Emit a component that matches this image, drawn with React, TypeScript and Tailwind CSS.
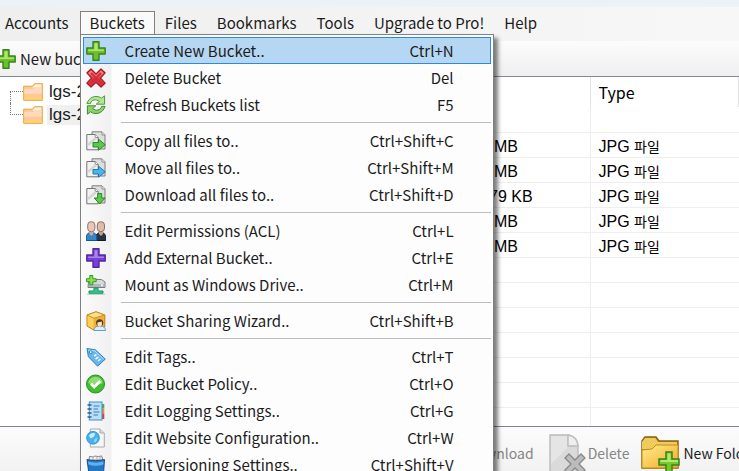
import type { ReactNode } from "react";

const uiFont = "font-['Noto_Sans_CJK_KR','Noto_Sans',sans-serif]";
const listFont = "font-['Liberation_Sans','Noto_Sans_CJK_KR',sans-serif]";

function Plus({ fill, light, stroke, className }: { fill: string; light: string; stroke: string; className: string }) {
  return (
    <svg viewBox="0 0 20 20" className={className} aria-hidden="true">
      <path d="M7 .8h6v6.2h6.2v6H13v6.2H7V13H.8V7H7z" fill={fill} stroke={stroke} strokeWidth="1.4" strokeLinejoin="round" />
      <path d="M8.4 2.2h3.2v6.2h6.2V10H2.2V8.4h6.2z" fill={light} />
    </svg>
  );
}

function Svg({ children }: { children: ReactNode }) {
  return (
    <svg viewBox="0 0 20 20" className="size-5 shrink-0" aria-hidden="true">
      {children}
    </svg>
  );
}

const greenPlus = (className: string) => <Plus fill="#6dc02c" light="#b4e66c" stroke="#38841e" className={className} />;

function CrossIcon() {
  return (
    <Svg>
      <path d="M5 .8l5 5 5-5 4.2 4.2-4.6 5 4.6 5-4.2 4.2-5-4.8-5 4.8L.8 15l4.6-5L.8 5z" fill="#d9333f" stroke="#a5131e" strokeWidth="1.1" strokeLinejoin="round" />
      <path d="M5 2.2l5 5 5-5L17.8 5l-5 4.4H7.2L2.2 5z" fill="#f0858b" />
      <path d="M5 5l10 10M15 5L5 15" stroke="#d42c3b" strokeWidth="2.4" />
    </Svg>
  );
}

function RefreshIcon() {
  return (
    <Svg>
      <path d="M.9 8.6C2.6 2.6 9.8-.9 15.4 3.2L18.6.8v8.4h-8.4l3.2-2.8C10 3.9 5.4 4.3 4.4 8.6z" fill="#b6e596" stroke="#4c9a3c" strokeLinejoin="round" />
      <path d="M19.1 11.4c-1.7 6-8.9 9.5-14.5 5.4l-3.2 2.4v-8.4h8.4l-3.2 2.8c3.4 2.5 8 2.1 9-2.2z" fill="#8ed26a" stroke="#3d8f34" strokeLinejoin="round" />
    </Svg>
  );
}

function PagesIcon({ kind }: { kind: "copy" | "move" | "download" }) {
  const fill = kind === "move" ? "#4ab7e8" : "#5cc94b";
  const stroke = kind === "move" ? "#1b79b2" : "#258a2a";
  return (
    <Svg>
      <path d="M6 .8h10l3 3V18H6z" fill="#dedede" stroke="#7f7f7f" strokeLinejoin="round" />
      <path d="M.8 3.5h8.4l3 3v12.3H.8z" fill="#f2f2f2" stroke="#747474" strokeLinejoin="round" />
      <path d="M9.200 3.500v3h3M16 1v3h3" fill="#fff" stroke="#888" />
      <path d="M2 14l8-7" stroke="#d6d6d6" strokeWidth="2.500" />
      {kind === "download" ? (
        <path d="M11.7 8.5h4V13h3.5l-5.5 6-5.500-6h3.500z" fill={fill} stroke={stroke} strokeLinejoin="round" />
      ) : (
        <path d="M7 11.500h5.500V8.200l6.800 5.600-6.800 5.400V16H7z" fill={fill} stroke={stroke} strokeLinejoin="round" />
      )}
    </Svg>
  );
}

function PeopleIcon() {
  return (
    <Svg>
      <path d="M9.5 19.5v-5l3-2.6h5l2.2 2.6v5z" fill="#263342" stroke="#111a24" />
      <path d="M13 9h4v4l-2 2-2-2z" fill="#c99f8b" />
      <rect x="11.3" y=".7" width="7.2" height="10" rx="3.4" fill="#dfbba9" stroke="#8e6c60" />
      <path d="M.3 19.5v-5l2.2-2.6h5.8l2.5 2.6v5z" fill="#3185cb" stroke="#15528e" />
      <path d="M3.4 9h4v4l-2 2-2-2z" fill="#d2aa97" />
      <rect x="1.7" y=".7" width="7.2" height="10" rx="3.4" fill="#e7c8b9" stroke="#94766a" />
    </Svg>
  );
}

function DriveIcon() {
  return (
    <Svg>
      <path d="M2.5 7L6 4.5h9.5L19 7v5.5H2z" fill="#d5d8d9" stroke="#777d80" strokeLinejoin="round" />
      <path d="M3 9h15.500v3H3z" fill="#b2b7ba" />
      <circle cx="16" cy="10.300" r="1" fill="#fff" />
      <path d="M8 13h4v3h5v2.4H3V16h5z" fill="#32c78c" stroke="#189566" />
      <path d="M1 19.3h18" stroke="#b8c9c2" />
      <path d="M3.800.500h3v3.200h3.400v3H6.800v3.100h-3V6.700H.500v-3h3.300z" fill="#8be052" stroke="#2f9c20" />
    </Svg>
  );
}

function BoxIcon() {
  return (
    <Svg>
      <path d="M1 4l9-3.2L18.8 4v12L8 19.2 1 15z" fill="#efb236" stroke="#bd7f16" strokeLinejoin="round" />
      <path d="M1 4l9-3.2L18.8 4 8 7.2z" fill="#fbe08c" stroke="#cb9223" strokeLinejoin="round" />
      <path d="M1.6 4.8L7.5 7.8v10.5l-5.9-3.8z" fill="#ffd15c" />
      <path d="M8 19.5c0-3 2.3-4.5 6-4.5s5.5 1.8 5.5 4.5z" fill="#d9efff" stroke="#699ac0" />
      <circle cx="13.7" cy="11.8" r="3.6" fill="#50372c" />
      <path d="M11.4 11.6l4.5-1.2v3.5c-.7 2.3-3.9 2.3-4.5 0z" fill="#ffe0bd" />
    </Svg>
  );
}

function TagIcon() {
  return (
    <Svg>
      <path d="M1 1.5l8.5 1.4 9.8 9.2-7.7 7.1L2.4 9.7z" fill="#68b7ec" stroke="#2d82c0" strokeLinejoin="round" />
      <path d="M2.3 3l6.6 1 8.7 8.1" fill="none" stroke="#b8e1fb" />
      <circle cx="4.8" cy="5.1" r="1.4" fill="#fff" stroke="#347fb2" />
      <path d="M8 9l2.500-1.500M9.500 12l3-2M12 14l2.500-2" stroke="#e9f7ff" strokeWidth="1.6" />
    </Svg>
  );
}

function CheckIcon() {
  return (
    <Svg>
      <circle cx="9.5" cy="10" r="9" fill="#42bd32" stroke="#239222" />
      <path d="M2.2 9a7.4 7.4 0 0114.6 0c-4 2-10 2-14.6 0z" fill="#90db79" />
      <path d="M5 9.8l3.2 3.3 6-6" fill="none" stroke="#fff" strokeWidth="2.8" />
    </Svg>
  );
}

function LogIcon() {
  return (
    <Svg>
      <path d="M16 3h2.3v4.5H16z" fill="#4cae40" />
      <path d="M16 7.5h2.3v5H16z" fill="#ef8b31" />
      <path d="M16 12.5h2.3V18H16z" fill="#d94336" />
      <rect x="3.3" y="1" width="12.7" height="18" fill="#b7defa" stroke="#3f92d0" />
      <path d="M1.5 4h4M1.5 8h4M1.5 12h4M1.5 16h4" stroke="#375b80" strokeWidth="1.3" />
      <path d="M7.5 5h6M7.5 8h4.5M7.5 11h6M7.5 14h4.5" stroke="#3b80b8" />
    </Svg>
  );
}

function WebIcon() {
  return (
    <Svg>
      <path d="M4.3 1H14l4.3 4v14h-14z" fill="#f6f6f6" stroke="#aaa" />
      <path d="M14 1v4h4.3" fill="#ddd" stroke="#aaa" />
      <circle cx="7" cy="9.8" r="6.3" fill="#49b1ef" stroke="#2992d7" />
      <path d="M3 7.7c1.2-2.3 4.2-3.4 6.3-2.1L8 8.5l-3.2 2z" fill="#c9efff" />
      <path d="M8.5 11l3-1.3-1.3 4.1-2 .6z" fill="#8fdaff" />
    </Svg>
  );
}

function VersionIcon() {
  return (
    <Svg>
      <path d="M3 5l.5-3.6 4 .6 1-1 4 .6 3-.7L17 5z" fill="#f4f4f4" stroke="#828282" />
      <path d="M7 1.5V5M11 1.5V5M14 2v3" stroke="#aaa" />
      <path d="M1 4.5c5 1.5 12.5 1.5 17.5 0l-1 14.5H3z" fill="#2377c5" stroke="#174f92" />
      <path d="M2 6.6c5 1.4 10.7 1.4 15.4 0v2.8c-5 1.8-10.2 1.8-15 0z" fill="#62b2ea" />
    </Svg>
  );
}

function FolderIcon() {
  return (
    <svg viewBox="0 0 20 20" className="size-5 shrink-0" aria-hidden="true">
      <path d="M.7 4.2h8.8l2-2.5h7.8v16.6H.7z" fill="#ffc898" stroke="#e8a33c" />
      <path d="M10.4 4.4l1.6-2h6.3v3H9.5z" fill="#fff3df" />
      <path d="M1.3 7h8.8l1.2-1.2h7.4v6H1.3z" fill="#ffd9bb" />
      <path d="M1.2 15h17.6v2.6H1.2z" fill="#ffd46e" />
    </svg>
  );
}

function DeleteFileIcon() {
  return (
    <svg viewBox="0 0 38 40" className="h-10 w-[38px] shrink-0" aria-hidden="true">
      <path d="M2 2h19q9 3 9 12v25H2z" fill="#dadada" stroke="#bcbcbc" strokeWidth="1.4" />
      <path d="M3 3h16v12L3 31z" fill="#e5e5e5" />
      <path d="M20 2v11h10Q29 3 20 2z" fill="#eee" stroke="#bcbcbc" strokeWidth="1.4" />
      <path d="M21 21l6 6 6-6 4 4-6 6 6 6-4 4-6-6-6 6-4-4 6-6-6-6z" fill="#bcbcbc" stroke="#888" strokeWidth="1.3" />
    </svg>
  );
}

function NewFolderIcon() {
  return (
    <svg viewBox="0 0 40 40" className="size-10 shrink-0" aria-hidden="true">
      <defs>
        <linearGradient id="folder" x2="1" y2="1">
          <stop stopColor="#ffed91" />
          <stop offset="1" stopColor="#f0a91f" />
        </linearGradient>
      </defs>
      <path d="M1 35V8l3-4h11l3 4h19v27z" fill="#d69b21" stroke="#886414" strokeWidth="1.5" />
      <path d="M1 34V9l3-4h10l3 4h19v4H14l-3 3H1z" fill="#f0cb5c" />
      <path d="M1 35V17l10-1 4-4h22v23z" fill="url(#folder)" stroke="#c18c1c" />
      <path d="M25 19h6v7h7v6h-7v8h-6v-8h-7v-6h7z" fill="#75c82f" stroke="#39821d" strokeWidth="1.5" />
      <path d="M26.5 20.5h3V27H37v2H19.500v-2h7z" fill="#b5e96a" />
    </svg>
  );
}

type Entry = { label: string; keys: string; icon: ReactNode };

const groups: Entry[][] = [
  [
    { label: "Create New Bucket..", keys: "Ctrl+N", icon: greenPlus("size-5 shrink-0") },
    { label: "Delete Bucket", keys: "Del", icon: <CrossIcon /> },
    { label: "Refresh Buckets list", keys: "F5", icon: <RefreshIcon /> },
  ],
  [
    { label: "Copy all files to..", keys: "Ctrl+Shift+C", icon: <PagesIcon kind="copy" /> },
    { label: "Move all files to..", keys: "Ctrl+Shift+M", icon: <PagesIcon kind="move" /> },
    { label: "Download all files to..", keys: "Ctrl+Shift+D", icon: <PagesIcon kind="download" /> },
  ],
  [
    { label: "Edit Permissions (ACL)", keys: "Ctrl+L", icon: <PeopleIcon /> },
    { label: "Add External Bucket..", keys: "Ctrl+E", icon: <Plus fill="#7742d2" light="#a982ee" stroke="#5426a4" className="size-5 shrink-0" /> },
    { label: "Mount as Windows Drive..", keys: "Ctrl+M", icon: <DriveIcon /> },
  ],
  [{ label: "Bucket Sharing Wizard..", keys: "Ctrl+Shift+B", icon: <BoxIcon /> }],
  [
    { label: "Edit Tags..", keys: "Ctrl+T", icon: <TagIcon /> },
    { label: "Edit Bucket Policy..", keys: "Ctrl+O", icon: <CheckIcon /> },
    { label: "Edit Logging Settings..", keys: "Ctrl+G", icon: <LogIcon /> },
    { label: "Edit Website Configuration..", keys: "Ctrl+W", icon: <WebIcon /> },
    { label: "Edit Versioning Settings..", keys: "Ctrl+Shift+V", icon: <VersionIcon /> },
  ],
];

function BucketsMenu() {
  return (
    <div
      role="menu"
      className="absolute top-full -left-px z-10 w-[414px] border border-[#808080] bg-[linear-gradient(to_right,#fbfbfb_0px,#f0f0f0_30px,#fdfdfd_31px)] px-0.5 pt-0.5 shadow-[4px_4px_4px_rgba(0,0,0,0.5)]"
    >
      {groups.map((group, g) => (
        <div key={g}>
          {g > 0 && (
            <div role="separator" className="flex h-[9px] items-center pl-[38px]">
              <div className="h-px w-full bg-[#bdbdbd]" />
            </div>
          )}
          {group.map((entry, i) => (
            <button
              key={entry.label}
              role="menuitem"
              className={`flex h-[27px] w-full items-center border pr-9 pl-0.5 text-left whitespace-nowrap ${
                g === 0 && i === 0 ? "border-[#2b8bdc] bg-[#b5d7f3]" : "border-transparent"
              }`}
            >
              {entry.icon}
              <span className="ml-[19px] flex-1">{entry.label}</span>
              <span>{entry.keys}</span>
            </button>
          ))}
        </div>
      ))}
    </div>
  );
}

const rows = ["", "MB", "MB", "79 KB", "MB", "MB", "", "", "", "", "", "", ""];

export default function App() {
  return (
    <div className={`flex h-screen flex-col overflow-hidden bg-[#f0f0f0] text-[15px] leading-5 text-[#1c1c1c] ${uiFont}`}>
      <div className="h-[7px] shrink-0 bg-[#edf2f8]" />
      <nav className="flex h-[34px] shrink-0 items-start bg-linear-to-r from-[#efefef] to-[#f7f7f7] pt-1 whitespace-nowrap">
        <button className="h-6 pr-[11px] pl-[5px]">Accounts</button>
        <div className="relative z-10 border border-b-0 border-[#808080] bg-[#fafafa]">
          <button className="h-[22px] px-[9px]" aria-expanded="true">Buckets</button>
          <BucketsMenu />
        </div>
        <button className="h-6 px-2.5">Files</button>
        <button className="h-6 px-2.5">Bookmarks</button>
        <button className="h-6 px-2.5">Tools</button>
        <button className="h-6 px-2.5">Upgrade to Pro!</button>
        <button className="h-6 px-2.5">Help</button>
      </nav>
      <div className="flex h-9 shrink-0 items-center border-b border-[#858b96] bg-linear-to-b from-[#fcfcfc] to-[#efefef]">
        <button className="-ml-1 flex items-center gap-1 whitespace-nowrap">
          {greenPlus("size-5")}
          New bucket
        </button>
      </div>
      <main className={`flex min-h-0 flex-1 bg-white text-[17px] ${listFont}`}>
        <aside className="w-[430px] shrink-0 pt-[3px] pl-2.5">
          {[0, 1].map((n) => (
            <div key={n} className="flex h-[23px] items-center">
              <span className="flex h-full w-[13px] flex-col">
                <span className={`h-3 border-dotted border-[#777] ${n === 0 ? "border-b" : "border-b border-l"}`} />
                <span className={`flex-1 border-dotted border-[#777] ${n === 0 ? "border-l" : ""}`} />
              </span>
              <FolderIcon />
              <span className={`ml-1 px-0.5 ${n === 1 ? "bg-[#f0f0f0]" : ""}`}>lgs-2</span>
            </div>
          ))}
        </aside>
        <div className="min-w-0 flex-1 overflow-hidden">
          <table className="w-full table-fixed border-collapse text-left text-[16px] text-black">
            <colgroup>
              <col className="w-40" />
              <col />
            </colgroup>
            <thead>
              <tr className={`h-[30px] text-[16px] ${uiFont}`}>
                <th aria-label="Size" className="border-r border-[#e2e2e2]" />
                <th className="border-r border-[#e2e2e2] py-0 pl-2 font-normal">Type</th>
              </tr>
            </thead>
            <tbody>
              {rows.map((size, i) => (
                <tr key={i} className="h-[25px] border-b border-[#eeeeee]">
                  <td className={`border-r border-[#eeeeee] p-0 pt-1 ${size === "79 KB" ? "pl-[59px]" : "pl-16"}`}>{size}</td>
                  <td className="p-0 pt-1 pl-2">
                    {size && (
                      <>
                        JPG <span className="text-[14px]">파일</span>
                      </>
                    )}
                  </td>
                </tr>
              ))}
            </tbody>
          </table>
        </div>
      </main>
      <footer className="flex h-[45px] shrink-0 items-start border-t border-[#7d8494] bg-linear-to-b from-[#fcfcfc] to-[#f2f2f2] pt-1.5 pl-[467px] text-[14px] whitespace-nowrap">
        <button className="flex h-10 items-center text-[#858585]" disabled>Download</button>
        <button className="ml-3.5 flex h-10 items-center gap-0.5 text-[#858585]" disabled>
          <DeleteFileIcon />
          Delete
        </button>
        <button className="ml-3 flex h-10 items-center gap-0.5">
          <NewFolderIcon />
          New Folder
        </button>
      </footer>
    </div>
  );
}
